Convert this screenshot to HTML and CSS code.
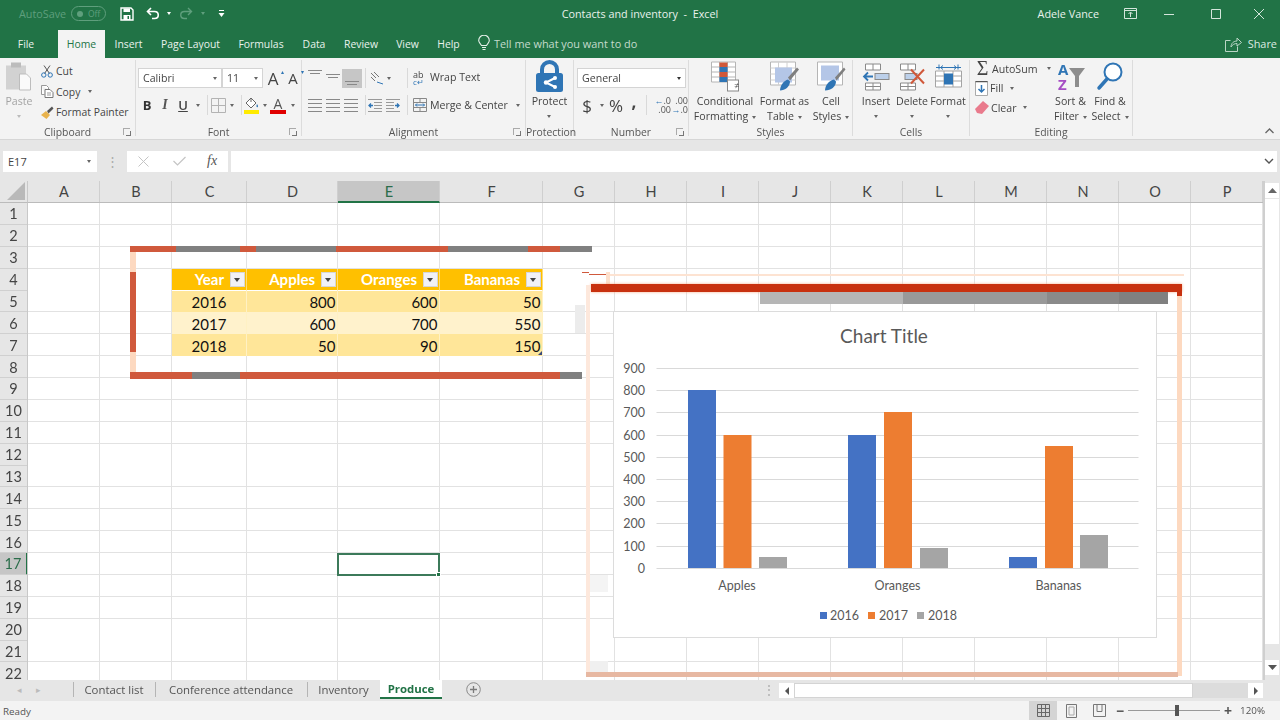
FILE: index.html
```html
<!DOCTYPE html>
<html lang="en">
<head>
<meta charset="utf-8">
<title>Contacts and inventory - Excel</title>
<link rel="stylesheet" href="styles.css">
</head>
<body>
<div class="app">
  <header class="titlebar">
    <div class="qat">
      <span class="autosave">AutoSave</span>
      <span class="toggle"><i></i>Off</span>
      <svg class="save" width="14" height="14" viewBox="0 0 14 14"><path d="M1 1h10l2 2v10H1z" fill="none" stroke="#fff" stroke-width="1.4"/><rect x="3.5" y="1.5" width="6.5" height="3.5" fill="#fff"/><rect x="3.5" y="8" width="7" height="5" fill="#fff"/><rect x="7.5" y="9" width="1.5" height="3" fill="#217346"/></svg>
      <svg class="undo" width="14" height="13" viewBox="0 0 14 13"><path d="M5 1 1.5 4.5 5 8M2 4.5h6.5c5 0 5 7 0 7H6" fill="none" stroke="#fff" stroke-width="1.6"/></svg>
      <span class="caret-w"></span>
      <svg class="redo" width="14" height="13" viewBox="0 0 14 13"><path d="M9 1l3.5 3.5L9 8M12 4.5H5.5c-5 0-5 7 0 7H8" fill="none" stroke="#5f9f7d" stroke-width="1.4"/></svg>
      <span class="caret-d"></span>
      <svg class="custom" width="7" height="8" viewBox="0 0 7 8"><path d="M1 0.5h5" stroke="#fff"/><path d="M0.5 3h6L3.5 7z" fill="#fff"/></svg>
    </div>
    <div class="doc">Contacts and inventory&nbsp; -&nbsp; Excel</div>
    <div class="winctl">
      <span class="user">Adele Vance</span>
      <svg class="ctl-restore" width="13" height="11" viewBox="0 0 13 11"><path d="M.5.5h12v10H.5zM.5 2.5h12M6.5 9V4.5M4.5 6l2-2 2 2" fill="none" stroke="#d5e6dc"/></svg>
      <svg class="ctl-min" width="10" height="10" viewBox="0 0 10 10"><path d="M0 5.500h10" stroke="#d5e6dc"/></svg>
      <svg class="ctl-max" width="10" height="10" viewBox="0 0 10 10"><path d="M.5.5h9v9h-9z" fill="none" stroke="#d5e6dc"/></svg>
      <svg class="ctl-close" width="10" height="10" viewBox="0 0 10 10"><path d="M0 0l10 10M10 0L0 10" stroke="#d5e6dc"/></svg>
    </div>
  </header>

  <nav class="tabs">
    <span class="tab t-file">File</span>
    <span class="tab t-home">Home</span>
    <span class="tab t-insert">Insert</span>
    <span class="tab t-page">Page Layout</span>
    <span class="tab t-form">Formulas</span>
    <span class="tab t-data">Data</span>
    <span class="tab t-rev">Review</span>
    <span class="tab t-view">View</span>
    <span class="tab t-help">Help</span>
    <svg class="bulb" width="12" height="16" viewBox="0 0 12 16"><path d="M3.5 10.5C2.500 8.500.7 7.500.7 5.500a5.300 5.300 0 0 1 10.600 0c0 2-1.800 3-2.800 5zM4 12.500h4M4.500 14.500h3" fill="none" stroke="#e6f0ea" stroke-width="1.100"/></svg>
    <span class="tellme">Tell me what you want to do</span>
    <span class="share">
      <svg width="17" height="16" viewBox="0 0 17 16"><path d="M5.500 4.500H.5v11h12v-5M6 11c0-4 3-6 6-6V2l4.500 4.500L12 10V7.500c-2.500 0-4.500 1-6 3.500z" fill="none" stroke="#b9d5c5"/></svg>
      Share
    </span>
  </nav>

  <section class="ribbon">
    <div class="group g-clip">
      <div class="gbody">
        <div class="big b-paste">
          <svg class="ic" width="28" height="30" viewBox="0 0 28 30"><rect x="1" y="4" width="20" height="24" fill="#d2d2d2"/><rect x="6" y="1" width="10" height="5" fill="#bcbcbc"/><path d="M14.500 12.500h7l4 4v12h-11z" fill="#fafafa" stroke="#bdbdbd"/></svg>
          <span class="blab muted">Paste</span>
          <span class="bcar muted-c"></span>
        </div>
        <div class="stack st-clip">
          <div class="item"><svg class="ii" width="12" height="13" viewBox="0 0 12 13"><path d="M3 .5l5.500 8M9 .5l-5.500 8" stroke="#555" fill="none"/><circle cx="2.800" cy="10" r="2.200" fill="none" stroke="#2f75b5"/><circle cx="9.200" cy="10" r="2.200" fill="none" stroke="#2f75b5"/></svg>Cut</div>
          <div class="item"><svg class="ii" width="13" height="13" viewBox="0 0 13 13"><path d="M.5.5h5l2 2v2M.5.5v9h3" fill="#fff" stroke="#999"/><path d="M4 4.500h5l3 3v5H4z" fill="#fff" stroke="#777"/><path d="M6 8h4M6 10h4" stroke="#999"/></svg>Copy<span class="car ml8"></span></div>
          <div class="item"><svg class="ii" width="13" height="13" viewBox="0 0 13 13"><path d="M0 9l5-4 4 4-3.500 4z" fill="#e8b34d"/><path d="M6 5l5-4.500 1.500 2-5 5z" fill="#555"/></svg>Format Painter</div>
        </div>
      </div>
      <div class="glabel">Clipboard<span class="launch"></span></div>
    </div>

    <div class="group g-font">
      <div class="rows">
        <div class="row">
          <span class="combo c-font">Calibri<span class="car"></span></span>
          <span class="combo c-size">11<span class="car"></span></span>
          <span class="tb w16 grow-a">A<sup class="up">▴</sup></span>
          <span class="tb w16 shrink-a">A<sup class="dn">▾</sup></span>
        </div>
        <div class="row">
          <span class="tb w18 f-b">B</span>
          <span class="tb w18 f-i">I</span>
          <span class="tb w18 f-u">U</span>
          <span class="tb w12"><span class="car"></span></span>
          <span class="vsep"></span>
          <svg class="borders" width="15" height="15" viewBox="0 0 15 15"><path d="M.5.500h14v14H.5zM7.500.500v14M.5 7.500h14" fill="none" stroke="#b3b3b3"/></svg>
          <span class="tb w12"><span class="car"></span></span>
          <span class="vsep"></span>
          <svg class="fill" width="16" height="17" viewBox="0 0 16 17"><path d="M7 1L2 6l5 5 5-5z" fill="#fff" stroke="#666"/><path d="M7 1V5" stroke="#666"/><path d="M13 7c1 1.500 1.500 2.500.5 3.200-1 .5-1.500-1-.5-3.200z" fill="#2f75b5"/><rect y="13" width="15" height="4" fill="#ffeb00"/></svg>
          <span class="tb w10"><span class="car"></span></span>
          <span class="tb w16 font-color">A</span>
          <span class="tb w14"><span class="car"></span></span>
        </div>
      </div>
      <div class="glabel">Font<span class="launch"></span></div>
    </div>

    <div class="group g-align">
      <div class="rows r-align">
        <div class="row">
          <span class="lines w18 top"><i></i><i></i></span>
          <span class="lines w18 mid"><i></i><i></i></span>
          <span class="lines w20 bot on"><i></i><i></i></span>
          <span class="vsep"></span>
          <svg class="orient" width="16" height="16" viewBox="0 0 16 16"><path d="M2 3l5 5M5 2l5 5M2 7l4 4" stroke="#777" fill="none"/><path d="M14 14l-6-2" stroke="#2f75b5"/></svg>
          <span class="tb w8"><span class="car"></span></span>
          <span class="sp11"></span>
          <span class="vsep"></span>
          <span class="ab"><b>ab</b><em>c↵</em></span>
          <span class="rtext">Wrap Text</span>
        </div>
        <div class="row">
          <span class="lines w18 left"><i></i><i></i><i></i><i></i></span>
          <span class="lines w18 cen"><i></i><i></i><i></i><i></i></span>
          <span class="lines w18 right"><i></i><i></i><i></i><i></i></span>
          <span class="sp2"></span>
          <span class="vsep"></span>
          <svg class="indent i1" width="14" height="13" viewBox="0 0 14 13"><path d="M0 .5h14M6 3.500h8M6 6.500h8M6 9.500h8M0 12.500h14" stroke="#999"/><path d="M5 6.500H1M3 4.500l-2 2 2 2" stroke="#2f75b5" fill="none" stroke-width="1.300"/></svg>
          <svg class="indent i2" width="14" height="13" viewBox="0 0 14 13"><path d="M0 .5h14M0 3.500h8M0 6.500h8M0 9.500h8M0 12.500h14" stroke="#999"/><path d="M9 6.500h4M11 4.500l2 2-2 2" stroke="#2f75b5" fill="none" stroke-width="1.300"/></svg>
          <span class="sp4"></span>
          <span class="vsep"></span>
          <svg class="merge" width="14" height="14" viewBox="0 0 14 14"><path d="M.5.500h13v13H.5zM.5 4.500h13M.5 9.500h13M7 .5v4M7 9.500v4" fill="none" stroke="#888"/><path d="M2.500 7h9M4 5.500 2.500 7 4 8.500M10 5.500 11.500 7 10 8.500" stroke="#2f75b5" fill="none"/></svg>
          <span class="rtext">Merge &amp; Center</span>
          <span class="car ml8"></span>
        </div>
      </div>
      <div class="glabel">Alignment<span class="launch"></span></div>
    </div>

    <div class="group g-prot">
      <div class="gbody">
        <div class="big b-prot">
          <svg class="ic" width="27" height="31" viewBox="0 0 27 31"><path d="M6 14V8.500a7.500 7.500 0 0 1 15 0V14" fill="none" stroke="#2f75b5" stroke-width="4"/><rect y="12" width="27" height="19" rx="2.500" fill="#2f75b5"/><path d="M19 17l-9 4.500 9 4.500" fill="none" stroke="#fff" stroke-width="2"/><circle cx="10" cy="21.500" r="2.200" fill="#fff"/><circle cx="19" cy="17" r="2" fill="#fff"/><circle cx="19" cy="26" r="2" fill="#fff"/></svg>
          <span class="blab">Protect</span>
          <span class="bcar"></span>
        </div>
      </div>
      <div class="glabel">Protection</div>
    </div>

    <div class="group g-num">
      <div class="rows r-num">
        <div class="row"><span class="combo c-gen">General<span class="car dark"></span></span></div>
        <div class="row">
          <span class="tb w20 dollar">$</span>
          <span class="tb w10"><span class="car"></span></span>
          <span class="tb w18 pct">%</span>
          <span class="tb w18 comma">,</span>
          <span class="vsep"></span>
          <span class="dec d1"><b><i>←</i>.0</b><b>.00</b></span>
          <span class="dec d2"><b>.00</b><b><i>→</i>.0</b></span>
        </div>
      </div>
      <div class="glabel">Number<span class="launch"></span></div>
    </div>

    <div class="group g-styles">
      <div class="gbody">
        <div class="big b-cf">
          <svg class="ic" width="28" height="30" viewBox="0 0 28 30"><path d="M.5.500h24v20H.5zM8.500.500v20M16.500.500v20M.5 5.500h24M.5 10.500h24M.5 15.500h24" fill="#fff" stroke="#b5b5b5"/><rect x="8.500" y="1" width="8" height="4.500" fill="#d0583a"/><rect x="8.500" y="5.500" width="8" height="5" fill="#2f75b5"/><rect x="8.500" y="10.500" width="8" height="5" fill="#d0583a"/><rect x="8.500" y="15.500" width="8" height="5" fill="#2f75b5"/><rect x="16.500" y="18.500" width="11" height="11" fill="#fff" stroke="#888"/></svg>
          <span class="ne">≠</span>
          <span class="blab">Conditional</span>
          <span class="blab">Formatting<span class="car ml4"></span></span>
        </div>
        <div class="big b-ft">
          <svg class="ic" width="29" height="30" viewBox="0 0 29 30"><path d="M.5.500h25v23H.5z" fill="#fff" stroke="#b5b5b5"/><path d="M.5 6.500h25M.5 12.500h25M.5 18.500h25M8.500.500v23M17 .5v23" stroke="#d0d0d0"/><rect x="5" y="6" width="17" height="15" fill="#b4c6e7"/><path d="M18 16L27 6l2 2-9 11z" fill="#7f7f7f"/><path d="M10 29c0-5 4-10 8-11l2 2c0 5-5 9-10 9z" fill="#2f75b5"/></svg>
          <span class="blab">Format as</span>
          <span class="blab">Table<span class="car ml4"></span></span>
        </div>
        <div class="big b-cs">
          <svg class="ic" width="28" height="30" viewBox="0 0 28 30"><path d="M.5.500h25v23H.5z" fill="#fff" stroke="#b5b5b5"/><rect x="4" y="4" width="18" height="15" fill="#b4c6e7"/><path d="M18 16L27 6l1.500 2-9 11z" fill="#7f7f7f"/><path d="M8 29c0-5 4-10 9-11l2 2c0 5-5 9-11 9z" fill="#2f75b5"/></svg>
          <span class="blab">Cell</span>
          <span class="blab">Styles<span class="car ml4"></span></span>
        </div>
      </div>
      <div class="glabel">Styles</div>
    </div>

    <div class="group g-cells">
      <div class="gbody">
        <div class="big b-cell">
          <svg class="ic" width="27" height="28" viewBox="0 0 27 28"><path d="M2.500 1.500h15v6h-15zM10 1.500v6M2.500 20.500h15v7h-15zM10 20.500v7M2.500 24h15" fill="#fff" stroke="#8a8a8a"/><rect x="12" y="11" width="14" height="6" fill="#bcd0ea" stroke="#8a8a8a"/><path d="M10 14H1M5 10l-4 4 4 4" fill="none" stroke="#2f75b5" stroke-width="1.800"/></svg>
          <span class="blab">Insert</span>
          <span class="bcar"></span>
        </div>
        <div class="big b-cell">
          <svg class="ic" width="27" height="28" viewBox="0 0 27 28"><path d="M1.500 1.500h15v6h-15zM9 1.500v6M1.500 20.500h15v7h-15zM9 20.500v7M1.500 24h15" fill="#fff" stroke="#8a8a8a"/><rect x="6" y="11" width="12" height="6" fill="#bcd0ea" stroke="#8a8a8a"/><path d="M12 7l13 14M25 7L12 21" stroke="#d0583a" stroke-width="2"/></svg>
          <span class="blab">Delete</span>
          <span class="bcar"></span>
        </div>
        <div class="big b-cell">
          <svg class="ic" width="27" height="28" viewBox="0 0 27 28"><path d="M1 5h25M4 2v5M23 2v5M6 5h16M8 3L5.500 5 8 7M19 3l2.500 2L19 7" fill="none" stroke="#2f75b5"/><path d="M.5 8.500h26v16H.5zM9 8.500v16M18 8.500v16M.5 13.500h26M.5 18.500h26" fill="#fff" stroke="#a5a5a5"/><rect x="9" y="11" width="9" height="11" fill="#2f75b5"/></svg>
          <span class="blab">Format</span>
          <span class="bcar"></span>
        </div>
      </div>
      <div class="glabel">Cells</div>
    </div>

    <div class="group g-edit">
      <div class="gbody">
        <div class="stack st-edit">
          <div class="item"><span class="sigma">Σ</span>AutoSum<span class="car ml8"></span></div>
          <div class="item"><svg class="ii" width="13" height="15" viewBox="0 0 13 15"><path d="M.5.500h12v14H.5z" fill="#fff" stroke="#aaa"/><path d="M.5.500h12" stroke="#555" stroke-width="1.500"/><path d="M6.500 4v7M3.500 8l3 3 3-3" stroke="#2f75b5" fill="none" stroke-width="1.500"/></svg>Fill<span class="car ml4"></span></div>
          <div class="item"><svg class="ii" width="14" height="13" viewBox="0 0 14 13"><path d="M8 0l6 5-7 8-5-1-2-4z" fill="#e97a8c"/></svg>Clear<span class="car ml4"></span></div>
        </div>
        <div class="big b-sort">
          <svg class="ic" width="28" height="31" viewBox="0 0 28 31"><text x="1" y="14" class="sort-a">A</text><text x="1" y="29" class="sort-z">Z</text><path d="M12 7h16l-6 8v11h-4V15z" fill="#8c8c8c"/></svg>
          <span class="blab">Sort &amp;</span>
          <span class="blab">Filter<span class="car ml4"></span></span>
        </div>
        <div class="big b-find">
          <svg class="ic" width="26" height="29" viewBox="0 0 26 29"><circle cx="16" cy="10" r="8.500" fill="#fff" stroke="#2f75b5" stroke-width="2"/><path d="M10 17L2 26" stroke="#2f75b5" stroke-width="3.500" stroke-linecap="round"/></svg>
          <span class="blab">Find &amp;</span>
          <span class="blab">Select<span class="car ml4"></span></span>
        </div>
      </div>
      <div class="glabel">Editing</div>
    </div>

    <div class="rib-rest"><svg width="9" height="6" viewBox="0 0 9 6"><path d="M.5 5l4-4 4 4" fill="none" stroke="#666" stroke-width="1.300"/></svg></div>
  </section>

  <div class="formula">
    <div class="namebox">E17<span class="car"></span></div>
    <span class="fdots">⋮</span>
    <div class="fxbox">
      <svg width="11" height="11" viewBox="0 0 11 11"><path d="M.5.500l10 10M10.500.500l-10 10" stroke="#c4c4c4"/></svg>
      <svg width="13" height="10" viewBox="0 0 13 10"><path d="M.5 5l4 4 8-8" fill="none" stroke="#c4c4c4" stroke-width="1.200"/></svg>
      <span class="fx">fx</span>
    </div>
    <div class="finput"><svg width="10" height="6" viewBox="0 0 10 6"><path d="M1 1l4 4 4-4" fill="none" stroke="#555" stroke-width="1.400"/></svg></div>
  </div>

  <main class="sheet">
    <div class="corner"><svg width="18" height="18" viewBox="0 0 18 18"><path d="M18 0v18H0z" fill="#b9b9b9"/></svg></div>
    <div class="colheads">
      <span>A</span><span>B</span><span>C</span><span>D</span><span class="sel">E</span><span>F</span><span>G</span><span>H</span><span>I</span><span>J</span><span>K</span><span>L</span><span>M</span><span>N</span><span>O</span><span>P</span>
    </div>
    <div class="vscroll">
      <span class="vbtn"><svg width="9" height="5" viewBox="0 0 9 5"><path d="M4.500 0L9 5H0z" fill="#666"/></svg></span>
      <div class="vthumb"></div>
      <span class="vbtn"><svg width="9" height="5" viewBox="0 0 9 5"><path d="M4.500 5L0 0h9z" fill="#555"/></svg></span>
    </div>
    <div class="rowheads">
      <span>1</span><span>2</span><span>3</span><span>4</span><span>5</span><span>6</span><span>7</span><span>8</span><span>9</span><span>10</span><span>11</span><span>12</span><span>13</span><span>14</span><span>15</span><span>16</span><span class="sel">17</span><span>18</span><span>19</span><span>20</span><span>21</span><span>22</span>
    </div>
    <div class="grid">
      <div class="gridcols"><i></i><i></i><i></i><i></i><i></i><i></i><i></i><i></i><i></i><i></i><i></i><i></i><i></i><i></i><i></i><i></i></div>

      <div class="cursor"><i></i></div>

      <div class="tframe">
        <div class="tf-top"></div>
        <div class="tf-left"></div>
        <div class="tf-bot"></div>
      </div>

      <div class="xltable">
        <div class="th">Year<span class="fbtn"></span></div>
        <div class="th">Apples<span class="fbtn"></span></div>
        <div class="th">Oranges<span class="fbtn"></span></div>
        <div class="th">Bananas<span class="fbtn"></span></div>
        <div class="td yr">2016</div><div class="td">800</div><div class="td">600</div><div class="td">50</div>
        <div class="td alt yr">2017</div><div class="td alt">600</div><div class="td alt">700</div><div class="td alt">550</div>
        <div class="td yr">2018</div><div class="td">50</div><div class="td">90</div><div class="td end">150</div>
      </div>

      <div class="smudge s1"></div>
      <div class="smudge s2"></div>
      <div class="smudge s3"></div>
      <div class="tick t1"></div>
      <div class="tick t2"></div>
      <div class="tick t3"></div>
      <div class="cframe">
        <div class="cf-pale"></div>
        <div class="cf-top"></div>
        <div class="cf-gray"></div>
        <div class="cf-left"></div>
        <div class="cf-right"></div>
        <div class="cf-bot"></div>
        <div class="cf-corner"></div>
      </div>

      <svg class="chart" width="542" height="325" viewBox="0 0 542 325">
        <g class="gl">
          <path d="M42.500 56.500H524.500M42.500 78.500H524.500M42.500 100.500H524.500M42.500 123.500H524.500M42.500 145.500H524.500M42.500 167.500H524.500M42.500 189.500H524.500M42.500 211.500H524.500M42.500 234.500H524.500M42.500 256.500H524.500"/>
        </g>
        <g class="bars-b">
          <rect x="74" y="78" width="28" height="178"/><rect x="234" y="123" width="28" height="133"/><rect x="395" y="245" width="28" height="11"/>
        </g>
        <g class="bars-o">
          <rect x="109.500" y="123" width="28" height="133"/><rect x="270" y="100" width="28" height="156"/><rect x="431" y="134" width="28" height="122"/>
        </g>
        <g class="bars-g">
          <rect x="145" y="245" width="28" height="11"/><rect x="306" y="236" width="28" height="20"/><rect x="466" y="223" width="28" height="33"/>
        </g>
        <text class="ctitle" x="270" y="31">Chart Title</text>
        <g class="yl">
          <text x="31" y="61">900</text><text x="31" y="83">800</text><text x="31" y="105">700</text><text x="31" y="128">600</text><text x="31" y="150">500</text><text x="31" y="172">400</text><text x="31" y="194">300</text><text x="31" y="216">200</text><text x="31" y="239">100</text><text x="31" y="261">0</text>
        </g>
        <g class="xl">
          <text x="123" y="278">Apples</text><text x="283.500" y="278">Oranges</text><text x="444.500" y="278">Bananas</text>
        </g>
        <g class="lg">
          <rect class="k-b" x="206" y="300" width="7" height="7"/><text x="216" y="308">2016</text>
          <rect class="k-o" x="254" y="300" width="7" height="7"/><text x="265" y="308">2017</text>
          <rect class="k-g" x="303" y="300" width="7" height="7"/><text x="314" y="308">2018</text>
        </g>
      </svg>
    </div>
  </main>

  <div class="sheetbar">
    <div class="navarrows"><span>◂</span><span>▸</span></div>
    <span class="stab s-a">Contact list</span>
    <span class="stab s-b">Conference attendance</span>
    <span class="stab s-c">Inventory</span>
    <span class="stab s-d">Produce</span>
    <svg class="addsheet" width="15" height="15" viewBox="0 0 15 15"><circle cx="7.500" cy="7.500" r="6.800" fill="none" stroke="#8a8a8a"/><path d="M7.500 4v7M4 7.500h7" stroke="#7a7a7a" stroke-width="1.300"/></svg>
    <span class="hdots">⋮</span>
    <div class="hscroll">
      <span class="hbtn"><svg width="4" height="8" viewBox="0 0 4 8"><path d="M4 0v8L0 4z" fill="#555"/></svg></span>
      <span class="hthumb"></span>
      <span class="htrack"></span>
      <span class="hbtn"><svg width="4" height="8" viewBox="0 0 4 8"><path d="M0 0v8l4-4z" fill="#555"/></svg></span>
    </div>
  </div>

  <footer class="status">
    <span class="ready">Ready</span>
    <div class="views">
      <span class="view on"><svg width="13" height="13" viewBox="0 0 13 13"><path d="M.5.500h12v12H.5zM4.500.500v12M8.500.500v12M.5 4.500h12M.5 8.500h12" fill="none" stroke="#666"/></svg></span>
      <span class="view"><svg width="11" height="14" viewBox="0 0 11 14"><path d="M.5.500h10v13H.5z" fill="none" stroke="#777"/><path d="M3 3h5v8H3z" fill="none" stroke="#aaa"/></svg></span>
      <span class="view"><svg width="13" height="13" viewBox="0 0 13 13"><path d="M.5.500h12v12H.5zM4 .5v7h5V.5" fill="none" stroke="#777"/></svg></span>
    </div>
    <div class="zoom">
      <span class="zm">−</span>
      <span class="slider"><i></i></span>
      <span class="zm">+</span>
      <span class="pctz">120%</span>
    </div>
  </footer>
</div>
</body>
</html>
```
FILE: styles.css
```css
* { box-sizing: border-box; }
html, body { margin: 0; padding: 0; }
body { width: 1280px; height: 720px; overflow: hidden; background: #fff; font-family: "Open Sans", "Noto Sans", sans-serif; color: #444; }
.app { width: 1280px; height: 720px; display: flex; flex-direction: column; overflow: hidden; filter: blur(.3px); }

/* title bar */
.titlebar { height: 30px; flex: none; background: #217346; color: #e9f2ed; display: grid; grid-template-columns: 1fr auto 1fr; align-items: center; font-size: 10.800px; padding-bottom: 3px; }
.qat { display: flex; align-items: center; padding-left: 19px; }
.autosave { color: #5f9f7d; width: 52px; }
.toggle { width: 35px; height: 15px; border: 1px solid #5f9f7d; border-radius: 8px; color: #5f9f7d; font-size: 8.500px; display: flex; align-items: center; gap: 5px; padding-left: 5px; }
.toggle i { width: 6px; height: 6px; border-radius: 50%; background: #5f9f7d; }
.save { margin-left: 14px; }
.undo { margin-left: 12px; }
.caret-w { width: 0; height: 0; border: 2.500px solid transparent; border-top: 3px solid #fff; border-bottom: 0; margin-left: 7px; }
.redo { margin-left: 8px; }
.caret-d { width: 0; height: 0; border: 2.500px solid transparent; border-top: 3px solid #5f9f7d; border-bottom: 0; margin-left: 8px; }
.custom { margin-left: 13px; }
.doc { white-space: nowrap; }
.winctl { display: flex; align-items: center; justify-content: flex-end; }
.user { margin-right: 25px; }
.ctl-min { margin-left: 27px; }
.ctl-max { margin-left: 37px; }
.ctl-close { margin: 0 16px 0 33px; }

/* tabs */
.tabs { height: 28px; flex: none; background: #217346; color: #e9f2ed; display: flex; align-items: center; font-size: 10.400px; }
.tab { height: 28px; display: flex; align-items: center; justify-content: center; flex: none; padding-bottom: 1px; }
.t-file { width: 52px; margin-right: 6px; }
.t-home { width: 47px; background: #f3f3f3; color: #217346; }
.t-insert { width: 47px; }
.t-page { width: 77px; }
.t-form { width: 64px; }
.t-data { width: 42px; }
.t-rev { width: 52px; }
.t-view { width: 41px; }
.t-help { width: 41px; }
.bulb { margin: 0 0 2px 9px; }
.tellme { margin: 0 0 1px 4px; color: #c4dbcd; font-size: 10.900px; }
.share { margin: 0 3px 1px auto; display: flex; align-items: center; gap: 6px; color: #dcebe2; font-size: 10.900px; }

/* ribbon */
.ribbon { height: 82px; flex: none; background: #f3f3f3; border-bottom: 1px solid #d6d6d6; display: flex; font-size: 10.600px; color: #444; }
.group { flex: none; display: flex; flex-direction: column; position: relative; border-right: 1px solid #dcdcdc; margin: 2px 0 3px; }
.g-clip { width: 136px; }
.g-font { width: 166px; }
.g-align { width: 224px; }
.g-prot { width: 48px; }
.g-num { width: 115px; }
.g-styles { width: 164px; }
.g-cells { width: 117px; }
.g-edit { width: 163px; }
.rib-rest { flex: 1; display: flex; justify-content: flex-end; align-items: flex-end; padding: 0 6px 5px 0; }
.gbody { height: 65px; display: flex; flex: none; }
.rows { height: 65px; flex: none; display: flex; flex-direction: column; gap: 6px; padding: 8px 0 0 2px; }
.row { height: 20px; display: flex; align-items: center; flex: none; }
.row + .row { margin-top: 1px; }
.glabel { height: 14px; line-height: 14px; flex: none; text-align: center; font-size: 10.400px; color: #555; position: relative; }
.launch { position: absolute; right: 5px; top: 3px; width: 7px; height: 7px; border-left: 1px solid #aaa; border-top: 1px solid #aaa; }
.launch::after { content: ""; position: absolute; right: -1px; bottom: -1px; width: 4px; height: 4px; border-right: 1px solid #777; border-bottom: 1px solid #777; }

.big { display: flex; flex-direction: column; align-items: center; flex: none; position: relative; }
.ic { height: 31px; flex: none; overflow: visible; }
.big .ic { margin: 1px 0 2px; }
.blab { height: 15px; line-height: 15px; white-space: nowrap; flex: none; }
.bcar { height: 15px; flex: none; position: relative; width: 5px; }
.bcar::after, .car { content: ""; display: inline-block; width: 0; height: 0; border: 2.500px solid transparent; border-top: 3px solid #666; border-bottom: 0; }
.bcar::after { position: absolute; left: 0; top: 6px; }
.muted { color: #a3a3a3; }
.muted-c::after { border-top-color: #bbb; }
.ml4 { margin-left: 4px; vertical-align: middle; }
.ml8 { margin-left: 8px; vertical-align: middle; }

.b-paste { width: 38px; }
.stack { display: flex; flex-direction: column; flex: none; }
.st-clip { margin: 1px 0 0 3px; font-size: 10.400px; }
.st-clip .item { height: 20.500px; }
.item { height: 20px; display: flex; align-items: center; white-space: nowrap; }
.ii { flex: none; }
.st-clip .ii { margin-right: 2px; margin-left: 0; }
.st-clip .item:first-child .ii { margin-right: 3px; }

.combo { height: 20px; background: #fff; border: 1px solid #d4d4d4; display: flex; align-items: center; justify-content: space-between; padding: 0 4px; flex: none; font-size: 10.600px; }
.c-font { width: 84px; }
.c-size { width: 41px; }
.c-gen { width: 109px; }
.car.dark { border-top-color: #333; }
.tb { display: flex; align-items: center; justify-content: center; flex: none; height: 20px; color: #444; }
.w8 { width: 8px; } .w10 { width: 10px; } .w12 { width: 12px; } .w14 { width: 14px; } .w16 { width: 16px; } .w18 { width: 18px; } .w20 { width: 20px; }
.grow-a, .shrink-a { position: relative; }
.grow-a { margin-left: 2px; font-size: 17px; }
.shrink-a { margin-left: 4px; font-size: 15px; }
.up, .dn { position: absolute; right: -3px; top: 1px; font-size: 6px; line-height: 6px; color: #2f75b5; }
.f-b { font-weight: 700; font-size: 13px; color: #333; }
.f-i { font-family: "Liberation Serif", serif; font-style: italic; font-weight: 700; font-size: 14px; color: #555; }
.f-u { font-size: 13px; text-decoration: underline; color: #444; font-weight: 600; }
.vsep { width: 6px; height: 20px; flex: none; position: relative; }
.vsep::after { content: ""; position: absolute; left: 3px; top: 0; bottom: 0; width: 1px; background: #d9d9d9; }
.borders { flex: none; margin-left: 1px; }
.fill { flex: none; }
.font-color { font-size: 14px; color: #555; border-bottom: 4px solid #e00000; height: 17px; line-height: 13px; }

.r-align { padding-left: 4px; }
.lines { height: 19px; flex: none; display: flex; flex-direction: column; gap: 2px; align-items: center; padding: 5px 0 0; }
.lines i { height: 1px; background: #888; display: block; width: 14px; flex: none; }
.lines.left, .lines.cen, .lines.right { padding-top: 3px; gap: 3px; }
.lines.top { padding-top: 1px; }
.lines.top i:last-child, .lines.mid i:last-child, .lines.bot i:last-child { width: 10px; }
.lines.bot { justify-content: flex-end; padding: 0 0 3px; }
.lines.on { background: #c6c6c6; }
.orient { margin-left: 1px; flex: none; }
.sp11 { width: 11px; flex: none; } .sp2 { width: 2px; flex: none; } .sp4 { width: 4px; flex: none; }
.ab { width: 14px; margin-left: 3px; flex: none; display: flex; flex-direction: column; line-height: 7px; font-size: 9px; }
.ab b { font-weight: 400; } .ab em { font-style: normal; color: #2f75b5; font-size: 8px; }
.rtext { margin-left: 3px; white-space: nowrap; }
.row:first-child .rtext { padding-bottom: 2px; }
.merge { margin-left: 3px; flex: none; }
.indent { flex: none; }
.i2 { margin-left: 4px; }

.b-prot { width: 47px; }
.r-num { padding-left: 3px; }
.dollar { font-size: 17px; }
.pct { font-size: 17px; }
.comma { font-size: 17px; font-weight: 700; padding-bottom: 8px; }
.dec { font-size: 9px; line-height: 9px; display: flex; flex-direction: column; align-items: flex-end; width: 20px; flex: none; color: #555; }
.dec b { font-weight: 400; }
.dec i { font-style: normal; color: #2f75b5; }
.d1 { margin-left: 2px; } .d2 { margin-left: 0; width: 17px; }

.g-styles .gbody { padding-left: 4px; }
.b-cf { width: 64px; } .b-ft { width: 55px; } .b-cs { width: 38px; }
.ne { position: absolute; left: 38px; top: 20px; font-size: 9px; line-height: 11px; width: 11px; text-align: center; color: #555; }
.g-cells .gbody { padding-left: 5px; }
.b-cell { width: 36px; }
.st-edit { margin: -1px 0 0 5px; width: 77px; }
.st-edit .item { height: 19.500px; gap: 2px; }
.sigma { width: 15px; font-size: 20px; line-height: 17px; color: #444; text-align: center; font-family: "Liberation Serif", serif; }
.b-sort { width: 37px; } .b-find { width: 42px; }
.sort-a { font: 700 15px "Open Sans", sans-serif; fill: #2f75b5; }
.sort-z { font: 700 15px "Open Sans", sans-serif; fill: #a64dc4; }

/* formula */
.formula { height: 41px; flex: none; background: #e6e6e6; display: flex; align-items: center; padding: 1px 3px 0; }
.namebox { width: 94px; height: 21px; background: #fff; display: flex; align-items: center; justify-content: space-between; padding: 0 6px 0 5px; font-size: 11px; flex: none; color: #444; }
.fdots { width: 30px; text-align: center; color: #aaa; font-size: 13px; flex: none; }
.fxbox { width: 101px; height: 21px; background: #fff; display: flex; align-items: center; gap: 24px; padding-left: 11px; flex: none; }
.fx { font: italic 14px "Liberation Serif", serif; color: #555; margin-left: -3px; }
.finput { flex: 1; height: 21px; background: #fff; margin-left: 3px; display: flex; align-items: center; justify-content: flex-end; padding-right: 3px; }

/* sheet */
.sheet { flex: none; height: 499px; display: grid; grid-template-columns: 28px 1235px 17px; grid-template-rows: 22px 477px; font-family: Lato, sans-serif; }
.corner { background: #e6e6e6; border-right: 1px solid #c8c8c8; border-bottom: 1px solid #bbb; display: flex; align-items: flex-end; justify-content: flex-end; padding: 0 2px 2px 0; }
.colheads, .gridcols { display: grid; grid-template-columns: 72px 72px 75px 91px 102px 103px repeat(10, 72px); }
.colheads { background: #e6e6e6; border-bottom: 1px solid #bbb; font-size: 14.500px; color: #444; }
.colheads span { display: flex; align-items: center; justify-content: center; border-right: 1px solid #cfcfcf; padding-left: 1px; }
.colheads .sel { background: #c6c6c6; border-bottom: 2px solid #217346; margin-bottom: -1px; color: #2a6d4a; }
.vscroll { grid-row: 1 / 3; grid-column: 3; background: #e6e6e6; border-left: 2px solid #cfcfcf; display: flex; flex-direction: column; align-items: center; padding: 2px 1px 5px 0; }
.vbtn { width: 14px; height: 15px; background: #fff; display: flex; align-items: center; justify-content: center; flex: none; }
.vthumb { width: 14px; height: 445px; background: #fff; margin: 1px 0 auto; flex: none; }
.rowheads { background: #e6e6e6; border-right: 1px solid #c8c8c8; display: flex; flex-direction: column; overflow: hidden; font-size: 14.500px; color: #444; }
.rowheads span { height: 21.875px; flex: none; display: flex; align-items: center; justify-content: center; border-bottom: 1px solid #d0d0d0; padding-top: 1px; }
.rowheads .sel { background: #c6c6c6; color: #2a6d4a; border-right: 2px solid #217346; margin-right: -1px; }
.grid { position: relative; overflow: hidden; background: repeating-linear-gradient(to bottom, #fff 0 20.875px, #e2e2e2 20.875px 21.875px); }
.gridcols { height: 100%; }
.gridcols i { border-right: 1px solid #e2e2e2; }

.cursor { position: absolute; left: 309px; top: 350px; width: 103px; height: 23px; border: 2px solid #3c7a5a; }
.cursor i { position: absolute; right: -3px; bottom: -3px; width: 5px; height: 5px; background: #217346; border: 1px solid #fff; }

.tf-top { position: absolute; left: 102px; top: 43px; width: 462px; height: 6px; background: linear-gradient(to right, #d0593c 0 46px, #808080 46px 110px, #d0593c 110px 126px, #808080 126px 206px, #d0593c 206px 318px, #808080 318px 398px, #d0593c 398px 430px, #808080 430px 462px); }
.tf-left { position: absolute; left: 102px; top: 49px; width: 6px; height: 121px; background: linear-gradient(to bottom, #fdd9c0 0 20px, #d0593c 20px 100px, #fdd9c0 100px 121px); }
.tf-bot { position: absolute; left: 102px; top: 169px; width: 452px; height: 7px; background: linear-gradient(to right, #d0593c 0 62px, #808080 62px 110px, #d0593c 110px 430px, #808080 430px 452px); }

.xltable { position: absolute; left: 144px; top: 65.625px; display: grid; grid-template-columns: 75px 91px 102px 103px; grid-auto-rows: 21.875px; font-size: 15px; color: #111; }
.th { background: #ffc000; color: #fff; font-weight: 700; display: flex; align-items: center; justify-content: flex-end; gap: 6px; padding-right: 1px; border-right: 1px solid #ffdc73; border-bottom: 1px solid #fff; }
.fbtn { width: 15px; height: 15px; background: #f1f1f6; border: 1px solid #d6d6d6; position: relative; flex: none; }
.fbtn::after { content: ""; position: absolute; left: 3px; top: 5px; border: 3.500px solid transparent; border-top: 4px solid #444; border-bottom: 0; }
.td { background: #ffe699; display: flex; align-items: center; justify-content: flex-end; padding: 2px 1.500px 0 0; border-right: 1px solid #fff1c4; position: relative; }
.td.alt { background: #fff2cc; }
.td.yr { justify-content: center; padding-right: 0; }
.td.end::after { content: ""; position: absolute; right: 0; bottom: 1px; border-left: 4px solid transparent; border-bottom: 4px solid #3a4a7a; }

.smudge { position: absolute; background: #ececec; }
.s1 { left: 547px; top: 102px; width: 10px; height: 28px; }
.s2 { left: 562px; top: 372px; width: 18px; height: 17px; background: #f4f4f4; }
.s3 { left: 562px; top: 458px; width: 18px; height: 11px; background: #f0f0f0; }
.tick { position: absolute; background: #d0593c; }
.t1 { left: 554px; top: 69px; width: 7px; height: 1px; }
.t2 { left: 561px; top: 71px; width: 20px; height: 1px; }
.t3 { left: 578px; top: 69px; width: 4px; height: 12px; background: #fde0cc; }

.cframe { position: absolute; left: 0; top: 0; width: 0; height: 0; }
.cf-pale { position: absolute; left: 582px; top: 71px; width: 574px; height: 2px; background: #fde3d2; }
.cf-top { position: absolute; left: 563px; top: 81px; width: 591px; height: 8px; background: #c8310f; box-shadow: 0 0 3px #f6a987; }
.cf-gray { position: absolute; left: 732px; top: 89px; width: 408px; height: 12px; background: linear-gradient(to right, #b6b6b6 0 143px, #999 143px 287px, #8a8a8a 287px 359px, #808080 359px 408px); }
.cf-left { position: absolute; left: 558px; top: 82px; width: 4px; height: 391px; background: #fde8dc; }
.cf-right { position: absolute; left: 1149px; top: 89px; width: 5px; height: 384px; background: #fdd9c0; }
.cf-bot { position: absolute; left: 558px; top: 469px; width: 592px; height: 5px; background: #e7b8a2; }
.cf-corner { position: absolute; left: 1149px; top: 89px; width: 5px; height: 4px; background: #c8310f; }

.chart { position: absolute; left: 586px; top: 109px; background: #fff; outline: 1px solid #dcdcdc; }
.gl path { stroke: #d9d9d9; stroke-width: 1; fill: none; }
.bars-b rect, .k-b { fill: #4472c4; }
.bars-o rect, .k-o { fill: #ed7d31; }
.bars-g rect, .k-g { fill: #a5a5a5; }
.ctitle { font: 19px Lato, sans-serif; fill: #595959; text-anchor: middle; }
.yl text { font: 12.500px Lato, sans-serif; fill: #595959; text-anchor: end; }
.xl text { font: 12.500px Lato, sans-serif; fill: #595959; text-anchor: middle; }
.lg text { font: 12.500px Lato, sans-serif; fill: #595959; }

/* sheet tabs */
.sheetbar { height: 21px; flex: none; background: #e6e6e6; display: flex; align-items: flex-start; font-size: 11.400px; color: #555; }
.navarrows { width: 73px; height: 19px; flex: none; display: flex; align-items: center; justify-content: center; gap: 14px; padding-right: 16px; color: #bbb; font-size: 9px; }
.stab { height: 19px; display: flex; align-items: center; justify-content: center; flex: none; position: relative; padding-bottom: 1px; }
.stab::before { content: ""; position: absolute; left: 0; top: 2px; bottom: 2px; width: 1px; background: #b5b5b5; }
.s-a { width: 82px; } .s-b { width: 152px; } .s-c { width: 73px; }
.s-d { width: 62px; background: #fff; color: #217346; font-weight: 700; border-bottom: 2px solid #217346; padding-bottom: 0; }
.s-d::before { display: none; }
.addsheet { margin: 2px 0 0 24px; flex: none; }
.hdots { margin: 1px 0 0 282px; width: 8px; color: #aaa; font-size: 12px; line-height: 18px; text-align: center; flex: none; }
.hscroll { margin: 3px 0 0 8px; display: flex; height: 15px; flex: none; }
.hbtn { width: 15px; background: #fff; display: flex; align-items: center; justify-content: center; }
.hthumb { width: 399px; background: #fff; border: 1px solid #d4d4d4; }
.htrack { width: 55px; background: #dcdcdc; }

/* status */
.status { height: 19px; flex: none; background: #f3f3f3; display: flex; align-items: center; font-size: 9.800px; color: #555; padding: 0 15px 0 3px; }
.ready { padding-top: 2px; }
.views { margin-left: auto; display: flex; height: 19px; }
.view { width: 28px; display: flex; align-items: center; justify-content: center; }
.view.on { background: #d4d4d4; }
.zoom { display: flex; align-items: center; }
.zm { width: 14px; text-align: center; font-size: 14px; font-weight: 700; line-height: 14px; color: #555; }
.slider { width: 92px; height: 1px; background: #999; position: relative; margin: 0 1px; }
.slider i { position: absolute; left: 47px; top: -5px; width: 4px; height: 11px; background: #555; }
.pctz { margin-left: 5px; }
```
